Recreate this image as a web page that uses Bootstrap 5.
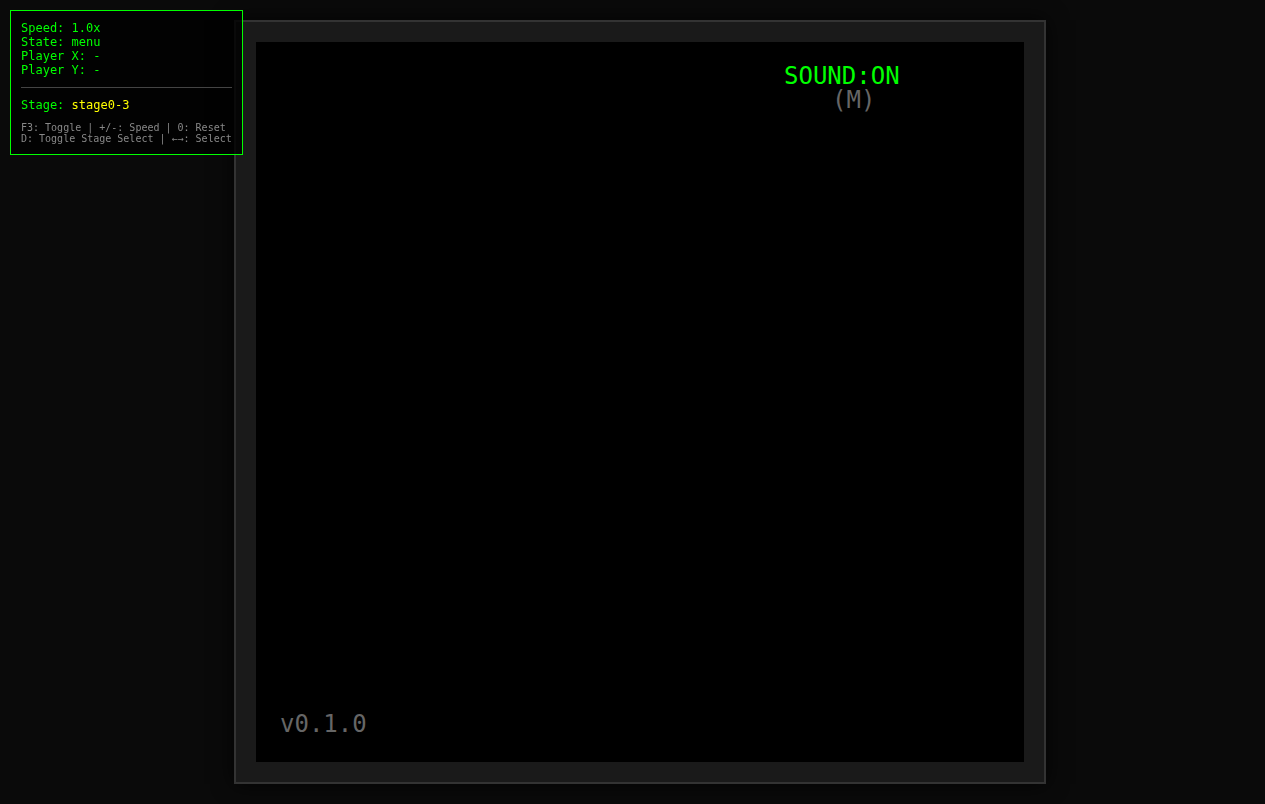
<!DOCTYPE html>
<html lang="en">
<head>
<meta charset="utf-8">
<meta name="viewport" content="width=device-width, initial-scale=1">
<title>Game menu</title>
<link rel="stylesheet" href="https://cdn.jsdelivr.net/npm/bootstrap@5.3.0/dist/css/bootstrap.min.css">
<style>
  body {
    background: #0a0a0a;
    font-family: "DejaVu Sans Mono", monospace;
  }
  .stage-area { padding: 20px 0 20px 15px; }
  .cabinet {
    width: 100%;
    max-width: 812px;
    padding: 20px;
    background: #1a1a1a;
    border: 2px solid #333;
    box-shadow: 0 0 20px rgba(0, 0, 0, .8);
  }
  .game-screen {
    aspect-ratio: 16 / 15;
    padding: 22px 24px 26px;
    background: #000;
    font-size: 24px;
    line-height: 24px;
    color: #666;
  }
  .sound-info { width: 216px; }
  .sound-key { padding-left: 48px; }
  .neon { color: #0f0; }
  .debug-panel {
    top: 10px;
    left: 10px;
    padding: 10px;
    background: rgba(0, 0, 0, .8);
    border: 1px solid #0f0;
    color: #0f0;
    font-size: 12px;
    line-height: 14px;
  }
  .debug-panel hr {
    margin: 10px 0;
    color: #444;
    border-top: 1px solid #444;
    opacity: 1;
  }
  .stage-name { color: #ff0; }
  .hints {
    margin-top: 10px;
    color: #888;
    font-size: 10px;
    line-height: 11px;
  }
</style>
</head>
<body>
<main class="stage-area min-vh-100 d-flex justify-content-center align-items-center">
  <div class="cabinet">
    <section class="game-screen d-flex flex-column justify-content-between">
      <div class="sound-info align-self-end">
        <div class="neon">SOUND:ON</div>
        <div class="sound-key">(M)</div>
      </div>
      <div>v0.1.0</div>
    </section>
  </div>
</main>
<aside class="debug-panel position-fixed text-nowrap">
  <div>Speed: 1.0x</div>
  <div>State: menu</div>
  <div>Player X: -</div>
  <div>Player Y: -</div>
  <hr>
  <div>Stage: <span class="stage-name">stage0-3</span></div>
  <div class="hints">
    <div>F3: Toggle | +/-: Speed | 0: Reset</div>
    <div>D: Toggle Stage Select | ←→: Select</div>
  </div>
</aside>
<script src="https://cdn.jsdelivr.net/npm/bootstrap@5.3.0/dist/js/bootstrap.bundle.min.js"></script>
</body>
</html>
